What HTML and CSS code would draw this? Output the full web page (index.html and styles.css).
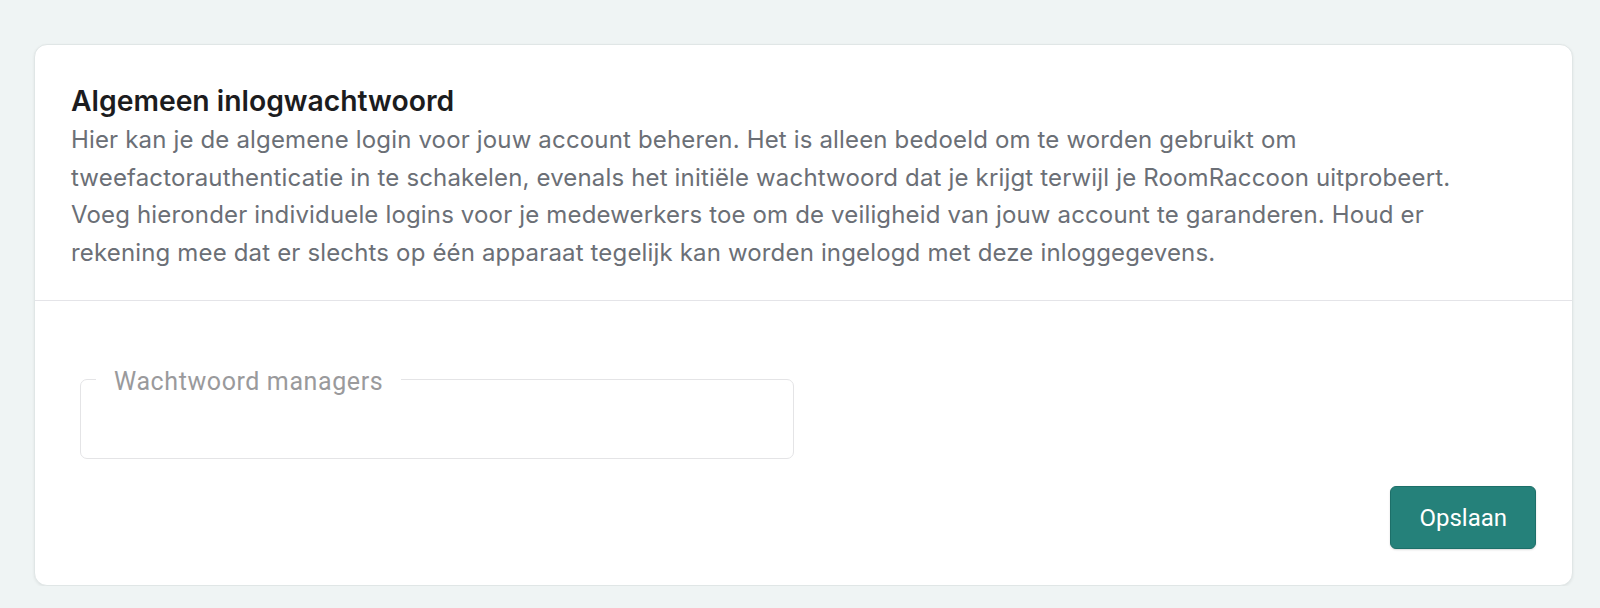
FILE: index.html
```html
<!DOCTYPE html>
<html lang="nl">
<head>
<meta charset="utf-8">
<title>Algemeen inlogwachtwoord</title>
<link rel="stylesheet" href="styles.css">
</head>
<body>
<main class="page">
  <section class="card">
    <header class="card-header">
      <h2 class="card-title">Algemeen inlogwachtwoord</h2>
      <p class="card-desc">Hier kan je de algemene login voor jouw account beheren. Het is alleen bedoeld om te worden gebruikt om tweefactorauthenticatie in te schakelen, evenals het initiële wachtwoord dat je krijgt terwijl je RoomRaccoon uitprobeert. Voeg hieronder individuele logins voor je medewerkers toe om de veiligheid van jouw account te garanderen. Houd er rekening mee dat er slechts op één apparaat tegelijk kan worden ingelogd met deze inloggegevens.</p>
    </header>
    <div class="card-body">
      <fieldset class="field">
        <legend class="field-label">Wachtwoord managers</legend>
        <div class="field-content"></div>
      </fieldset>
      <div class="actions">
        <button class="btn-primary" type="button">Opslaan</button>
      </div>
    </div>
  </section>
</main>
</body>
</html>
```
FILE: styles.css
```css
html, body {
  margin: 0;
  padding: 0;
}
body {
  background: #eff4f4;
  font-family: Inter, "Noto Sans", sans-serif;
}
.page {
  padding: 44px 27px 0 34px;
}
.card {
  background: #ffffff;
  border: 1px solid #e0e6e6;
  border-radius: 13px;
  box-shadow: 0 1px 3px rgba(0, 0, 0, 0.07);
}
.card-header {
  padding: 36px 36px 29px 36px;
  border-bottom: 1px solid #e4e4e8;
}
.card-title {
  margin: 0;
  font-size: 28.3px;
  line-height: 40px;
  font-weight: 600;
  color: #1c1c1e;
}
.card-desc {
  margin: 0;
  max-width: 1426px;
  font-size: 24px;
  line-height: 37.5px;
  font-weight: 400;
  letter-spacing: 0.16px;
  color: #6b6f76;
}
.card-body {
  padding: 63px 36px 36px 36px;
}
.field {
  margin: 0 0 0 9px;
  width: 714px;
  box-sizing: border-box;
  padding: 0 15px;
  border: 1px solid #e4e4e6;
  border-radius: 7px;
}
.field-label {
  padding: 6px 18px 0 18px;
  font-family: Roboto, "Liberation Sans", sans-serif;
  font-size: 25px;
  line-height: 24px;
  letter-spacing: 0.6px;
  color: #9a9a9c;
}
.field-content {
  height: 64px;
}
.actions {
  display: flex;
  justify-content: flex-end;
  margin-top: 27px;
}
.btn-primary {
  height: 63px;
  padding: 0 28px;
  background: #25817a;
  border: 1px solid #1d6f69;
  border-radius: 6px;
  color: #ffffff;
  font-family: Roboto, "Liberation Sans", sans-serif;
  font-size: 24px;
  box-shadow: 0 1px 2px rgba(0, 0, 0, 0.15);
}
```
